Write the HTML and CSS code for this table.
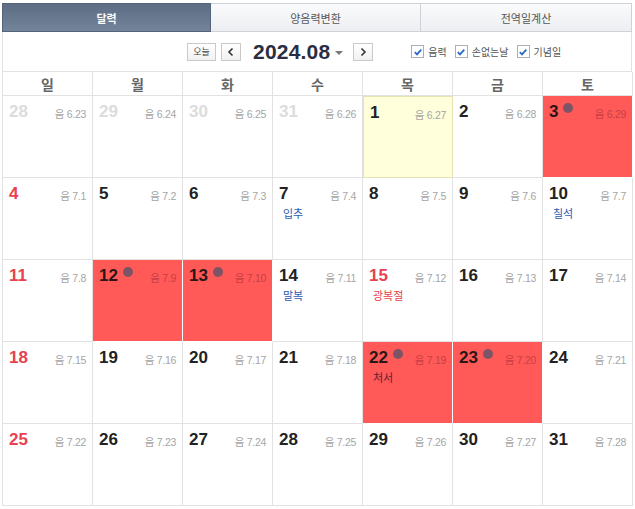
FILE: index.html
```html
<!DOCTYPE html>
<html lang="ko">
<head>
    <meta charset="UTF-8">
    <title>달력</title>
    <link rel="stylesheet" href="styles.css">
</head>
<body>
<div class="wrap">
    <!-- tabs -->
    <div class="tabs">
        <div class="tab active">달력</div>
        <div class="tab">양음력변환</div>
        <div class="tab">전역일계산</div>
    </div>

    <!-- toolbar -->
    <div class="toolbar">
        <span class="btn today">오늘</span>
        <span class="btn arrow">
            <svg width="8" height="10" viewBox="0 0 8 10"><path d="M5.5 1.5 L2 5 L5.5 8.5" fill="none" stroke="#333" stroke-width="1.6"/></svg>
        </span>
        <span class="month">2024.08</span>
        <span class="caret"></span>
        <span class="btn arrow next">
            <svg width="8" height="10" viewBox="0 0 8 10"><path d="M2.5 1.5 L6 5 L2.5 8.5" fill="none" stroke="#333" stroke-width="1.6"/></svg>
        </span>
        <div class="checks">
            <label class="chk"><span class="box"><svg width="10" height="10" viewBox="0 0 10 10"><path d="M1.8 5.2 L4 7.4 L8.3 2.6" fill="none" stroke="#2a6ac8" stroke-width="1.8"/></svg></span>음력</label>
            <label class="chk"><span class="box"><svg width="10" height="10" viewBox="0 0 10 10"><path d="M1.8 5.2 L4 7.4 L8.3 2.6" fill="none" stroke="#2a6ac8" stroke-width="1.8"/></svg></span>손없는날</label>
            <label class="chk"><span class="box"><svg width="10" height="10" viewBox="0 0 10 10"><path d="M1.8 5.2 L4 7.4 L8.3 2.6" fill="none" stroke="#2a6ac8" stroke-width="1.8"/></svg></span>기념일</label>
        </div>
    </div>

    <!-- calendar -->
    <div class="cal">
        <div class="dow">일</div>
        <div class="dow">월</div>
        <div class="dow">화</div>
        <div class="dow">수</div>
        <div class="dow">목</div>
        <div class="dow">금</div>
        <div class="dow">토</div>

        <div class="cell other"><div class="top"><span class="num">28</span><span class="lunar">음 6.23</span></div></div>
        <div class="cell other"><div class="top"><span class="num">29</span><span class="lunar">음 6.24</span></div></div>
        <div class="cell other"><div class="top"><span class="num">30</span><span class="lunar">음 6.25</span></div></div>
        <div class="cell other"><div class="top"><span class="num">31</span><span class="lunar">음 6.26</span></div></div>
        <div class="cell today-cell"><div class="top"><span class="num">1</span><span class="lunar">음 6.27</span></div></div>
        <div class="cell"><div class="top"><span class="num">2</span><span class="lunar">음 6.28</span></div></div>
        <div class="cell mark"><div class="top"><span class="num">3</span><span class="dot"></span><span class="lunar">음 6.29</span></div></div>

        <div class="cell sun"><div class="top"><span class="num">4</span><span class="lunar">음 7.1</span></div></div>
        <div class="cell"><div class="top"><span class="num">5</span><span class="lunar">음 7.2</span></div></div>
        <div class="cell"><div class="top"><span class="num">6</span><span class="lunar">음 7.3</span></div></div>
        <div class="cell"><div class="top"><span class="num">7</span><span class="lunar">음 7.4</span></div><div class="evt blue">입추</div></div>
        <div class="cell"><div class="top"><span class="num">8</span><span class="lunar">음 7.5</span></div></div>
        <div class="cell"><div class="top"><span class="num">9</span><span class="lunar">음 7.6</span></div></div>
        <div class="cell"><div class="top"><span class="num">10</span><span class="lunar">음 7.7</span></div><div class="evt blue">칠석</div></div>

        <div class="cell sun"><div class="top"><span class="num">11</span><span class="lunar">음 7.8</span></div></div>
        <div class="cell mark"><div class="top"><span class="num">12</span><span class="dot"></span><span class="lunar">음 7.9</span></div></div>
        <div class="cell mark"><div class="top"><span class="num">13</span><span class="dot"></span><span class="lunar">음 7.10</span></div></div>
        <div class="cell"><div class="top"><span class="num">14</span><span class="lunar">음 7.11</span></div><div class="evt blue">말복</div></div>
        <div class="cell sun"><div class="top"><span class="num">15</span><span class="lunar">음 7.12</span></div><div class="evt red">광복절</div></div>
        <div class="cell"><div class="top"><span class="num">16</span><span class="lunar">음 7.13</span></div></div>
        <div class="cell"><div class="top"><span class="num">17</span><span class="lunar">음 7.14</span></div></div>

        <div class="cell sun"><div class="top"><span class="num">18</span><span class="lunar">음 7.15</span></div></div>
        <div class="cell"><div class="top"><span class="num">19</span><span class="lunar">음 7.16</span></div></div>
        <div class="cell"><div class="top"><span class="num">20</span><span class="lunar">음 7.17</span></div></div>
        <div class="cell"><div class="top"><span class="num">21</span><span class="lunar">음 7.18</span></div></div>
        <div class="cell mark"><div class="top"><span class="num">22</span><span class="dot"></span><span class="lunar">음 7.19</span></div><div class="evt dark">처서</div></div>
        <div class="cell mark"><div class="top"><span class="num">23</span><span class="dot"></span><span class="lunar">음 7.20</span></div></div>
        <div class="cell"><div class="top"><span class="num">24</span><span class="lunar">음 7.21</span></div></div>

        <div class="cell sun"><div class="top"><span class="num">25</span><span class="lunar">음 7.22</span></div></div>
        <div class="cell"><div class="top"><span class="num">26</span><span class="lunar">음 7.23</span></div></div>
        <div class="cell"><div class="top"><span class="num">27</span><span class="lunar">음 7.24</span></div></div>
        <div class="cell"><div class="top"><span class="num">28</span><span class="lunar">음 7.25</span></div></div>
        <div class="cell"><div class="top"><span class="num">29</span><span class="lunar">음 7.26</span></div></div>
        <div class="cell"><div class="top"><span class="num">30</span><span class="lunar">음 7.27</span></div></div>
        <div class="cell"><div class="top"><span class="num">31</span><span class="lunar">음 7.28</span></div></div>
    </div>
</div>
</body>
</html>
```

FILE: styles.css
```css
body {
    margin: 0;
    padding: 3px 0 0 2px;
    background: #fff;
    font-family: "Liberation Sans", "Noto Sans CJK KR", sans-serif;
    color: #222;
}
.wrap {
    width: 630px;
}

/* tabs */
.tabs {
    display: grid;
    grid-template-columns: 209px 210px 211px;
    height: 29px;
}
.tab {
    display: flex;
    align-items: center;
    justify-content: center;
    font-family: "Noto Sans CJK KR", sans-serif;
    font-size: 11px;
    color: #555;
    background: linear-gradient(#fafbfc, #eceef2);
    border: 1px solid #cdd1d8;
    border-left: none;
}
.tab.active {
    color: #fff;
    font-weight: bold;
    background: linear-gradient(#5d6d84, #73839a);
    border: 1px solid #54647a;
}

/* toolbar */
.toolbar {
    display: flex;
    align-items: center;
    height: 39px;
    padding-left: 184px;
    border-left: 1px solid #e2e2e2;
    border-right: 1px solid #e2e2e2;
    box-sizing: border-box;
}
.btn {
    display: flex;
    align-items: center;
    justify-content: center;
    height: 16px;
    border: 1px solid #c9c9c9;
    background: linear-gradient(#fff, #f1f1f1);
    font-family: "Noto Sans CJK KR", sans-serif;
    font-size: 9px;
    color: #444;
}
.btn.today {
    width: 27px;
}
.btn.arrow {
    width: 18px;
    margin-left: 5px;
}
.btn.arrow.next {
    margin-left: 0;
}
.month {
    margin-left: 12px;
    font-size: 21px;
    font-weight: bold;
    color: #2b2e42;
    letter-spacing: 0.2px;
}
.caret {
    margin: 2px 10px 0 5px;
    width: 0;
    height: 0;
    border-left: 4px solid transparent;
    border-right: 4px solid transparent;
    border-top: 4px solid #777;
}
.checks {
    display: flex;
    gap: 8px;
    margin-left: 38px;
}
.chk {
    display: flex;
    align-items: center;
    gap: 4px;
    font-family: "Noto Sans CJK KR", sans-serif;
    font-size: 10px;
    color: #555;
}
.box {
    display: flex;
    align-items: center;
    justify-content: center;
    width: 11px;
    height: 11px;
    border: 1px solid #aab0b8;
    background: #fff;
}

/* calendar grid */
.cal {
    display: grid;
    grid-template-columns: repeat(7, 90px);
    grid-template-rows: 24px repeat(5, 82px);
    border-top: 1px solid #e2e2e2;
    border-left: 1px solid #e2e2e2;
}
.dow,
.cell {
    border-right: 1px solid #e2e2e2;
    border-bottom: 1px solid #e2e2e2;
    box-sizing: border-box;
}
.dow {
    display: flex;
    align-items: center;
    justify-content: center;
    font-family: "Noto Sans CJK KR", sans-serif;
    font-size: 14px;
    font-weight: bold;
    color: #666;
}
.cell {
    padding: 7px 6px 0 6px;
}
.top {
    display: flex;
    align-items: flex-start;
}
.num {
    font-size: 17px;
    font-weight: bold;
    line-height: 18px;
    color: #222;
}
.lunar {
    margin-left: auto;
    margin-top: 3px;
    font-size: 10.5px;
    color: #a5a5a5;
    letter-spacing: -0.3px;
}
.dot {
    width: 10px;
    height: 10px;
    margin: 0 0 0 5px;
    border-radius: 50%;
    background: #7c5466;
}
.evt {
    margin: 2px 0 0 4px;
    font-family: "Noto Sans CJK KR", sans-serif;
    font-size: 11px;
}
.evt.blue { color: #2d5bb2; }
.evt.red { color: #e5414e; }
.evt.dark { color: #5a2235; }

.cell.other .num { color: #dcdcdc; }
.cell.sun .num { color: #e8414f; }
.cell.today-cell {
    background: #ffffdc;
    border: 1px solid #e6e2b4;
}
.cell.mark {
    background: #ff5a58;
    border-color: #fff;
}
.cell.mark .num { color: #2a1616; }
.cell.mark .lunar { color: #c83e44; }
```
